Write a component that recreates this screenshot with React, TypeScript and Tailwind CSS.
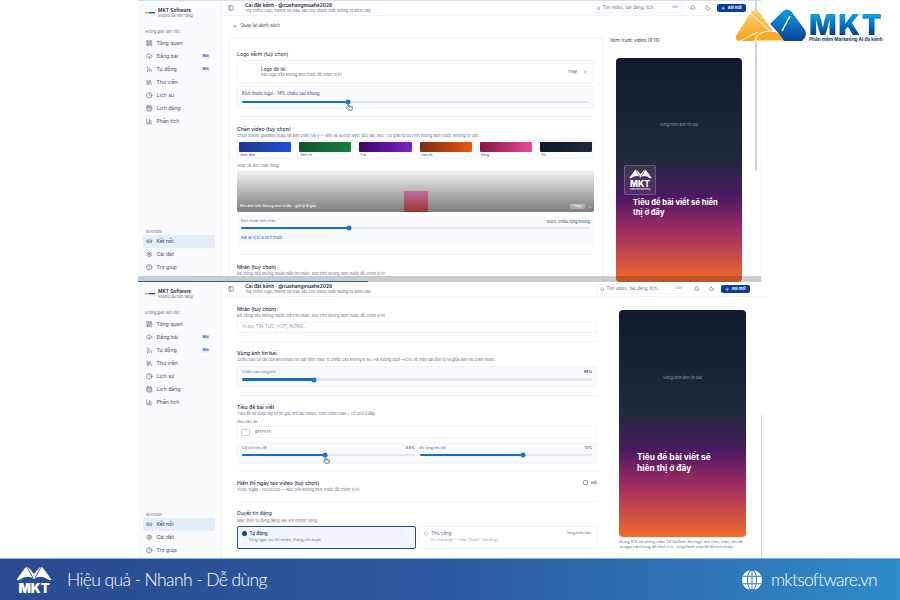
import {
  ArrowLeft,
  Bell,
  CalendarDays,
  ChartColumn,
  CircleHelp,
  Clock,
  CloudUpload,
  LayoutDashboard,
  Library,
  Link2,
  Moon,
  PanelLeft,
  Plus,
  Pointer,
  Rss,
  Search,
  Settings,
  X,
} from "lucide-react";

const workspace = [
  { label: "Tổng quan", icon: LayoutDashboard },
  { label: "Đăng bài", icon: CloudUpload, badge: "Mới" },
  { label: "Tự động", icon: Rss, badge: "Mới" },
  { label: "Thư viện", icon: Library },
  { label: "Lịch sử", icon: Clock },
  { label: "Lịch đăng", icon: CalendarDays },
  { label: "Phân tích", icon: ChartColumn },
];

const account = [
  { label: "Kết nối", icon: Link2, active: true },
  { label: "Cài đặt", icon: Settings },
  { label: "Trợ giúp", icon: CircleHelp },
];

const swatches = [
  { label: "Xanh đậm", cls: "bg-gradient-to-r from-[#1e3a8a] to-[#1d4ed8]" },
  { label: "Xanh lá", cls: "bg-gradient-to-r from-[#14532d] to-[#15803d]" },
  { label: "Tím", cls: "bg-gradient-to-r from-[#3b0764] to-[#7e22ce]" },
  { label: "Cam đỏ", cls: "bg-gradient-to-r from-[#7c2d12] to-[#ea580c]" },
  { label: "Hồng", cls: "bg-gradient-to-r from-[#831843] to-[#ec4899]" },
  { label: "Tối", cls: "bg-gradient-to-r from-[#0f172a] to-[#1e293b]" },
];

function NavRow({ item }: { item: { label: string; icon: typeof Clock; badge?: string; active?: boolean } }) {
  const Icon = item.icon;
  return (
    <div
      className={`flex h-[13px] items-center gap-[4px] rounded-[2px] pl-[3px] pr-[5px] text-[5.2px] ${
        item.active ? "bg-[#e3eefa] text-[#1e3a5f]" : "text-slate-600"
      }`}
    >
      <Icon className="h-[6.5px] w-[6.5px]" strokeWidth={2} />
      <span>{item.label}</span>
      {item.badge && (
        <span className="ml-auto rounded-[1px] bg-[#e9f0f9] px-[1.5px] text-[3.2px] font-semibold text-[#1e4e8c]">
          {item.badge}
        </span>
      )}
    </div>
  );
}

function Sidebar({ pad }: { pad: string }) {
  return (
    <aside className={`flex h-[276px] w-[84px] shrink-0 flex-col border-r border-slate-100 bg-[#fafbfd] pl-[5px] pr-[6px] pt-[7px] ${pad}`}>
      <div className="flex h-[9px] items-center gap-[3px] pl-[2px]">
        <svg viewBox="0 0 10 3" className="h-[3px] w-[10px]">
          <rect x="0" y="1" width="4" height="1.4" fill="#f59e0b" />
          <rect x="4" y="1" width="6" height="1.4" fill="#1d4ed8" />
        </svg>
        <div className="leading-[5px]">
          <p className="text-[4.8px] font-semibold text-slate-800">MKT Software</p>
          <p className="text-[3.9px] text-slate-500">Studio đa nền tảng</p>
        </div>
      </div>
      <p className="mt-[12px] mb-[3px] pl-[2px] text-[3.7px] leading-[5px] text-slate-500">Không gian làm việc</p>
      {workspace.map((item) => (
        <NavRow key={item.label} item={item} />
      ))}
      <div className="mt-auto">
        <p className="mb-[1px] pl-[2px] text-[3.7px] leading-[5px] text-slate-500">Tài khoản</p>
        {account.map((item) => (
          <NavRow key={item.label} item={item} />
        ))}
      </div>
    </aside>
  );
}

function Header({ searchW }: { searchW: string }) {
  return (
    <header className="flex h-[15px] shrink-0 items-center border-b border-slate-100 pl-[6px]">
      <PanelLeft className="h-[6px] w-[6px] text-slate-600" strokeWidth={2} />
      <div className="ml-[11px] leading-[5.5px]">
        <p className="text-[4.9px] font-semibold text-slate-800">Cài đặt kênh · @cushangmuahe2026</p>
        <p className="text-[3.9px] text-slate-500">Tùy chỉnh logo, theme và màu sắc cho video xuất xưởng từ kênh này</p>
      </div>
      <div className={`ml-auto flex h-[10px] ${searchW} items-center gap-[2px] rounded-[2px] border border-slate-100 pl-[2px] pr-[4px] text-[4.4px] text-slate-500`}>
        <Search className="h-[4.5px] w-[4.5px]" strokeWidth={2} />
        <span>Tìm video, bài đăng, lịch...</span>
        <span className="ml-auto text-[3.4px]">Ctrl</span>
      </div>
      <Bell className="ml-[7px] h-[5.5px] w-[5.5px] text-slate-600" strokeWidth={2} />
      <Moon className="ml-[9px] h-[5.5px] w-[5.5px] text-slate-600" strokeWidth={2} />
      <button className="ml-[7px] mr-[15px] flex h-[8px] w-[29px] items-center justify-center gap-[2px] rounded-[2px] bg-[#0b3f94] text-[3.9px] font-semibold text-white">
        <Plus className="h-[4.5px] w-[4.5px]" strokeWidth={3} />
        Bài mới
      </button>
    </header>
  );
}

function Slider({ pct, thick = false }: { pct: number; thick?: boolean }) {
  return (
    <div className={`relative rounded-full bg-slate-200 ${thick ? "h-[3px]" : "h-[2px]"}`}>
      <div className="h-full rounded-full bg-[#1a6fc4]" style={{ width: `${pct}%` }} />
      <div
        className="absolute top-1/2 h-[5px] w-[5px] -translate-x-1/2 -translate-y-1/2 rounded-full bg-[#1a78d0]"
        style={{ left: `${pct}%` }}
      />
    </div>
  );
}

function Heading({ title, desc }: { title: string; desc: string }) {
  return (
    <div className="leading-[6.5px]">
      <p className="text-[5.1px] font-medium text-slate-800">{title}</p>
      <p className="text-[3.9px] text-slate-500">{desc}</p>
    </div>
  );
}

function Cursor({ cls }: { cls: string }) {
  return <Pointer className={`absolute h-[7px] w-[7px] fill-white text-slate-700 ${cls}`} strokeWidth={2} />;
}

function Phone({ size, children }: { size: string; children: React.ReactNode }) {
  return (
    <div
      className={`relative flex shrink-0 flex-col rounded-[4px] bg-[linear-gradient(180deg,#111a2e_0%,#1e293b_44%,#4c1a62_62%,#9b2a63_76%,#f26b2c_100%)] ${size}`}
    >
      {children}
    </div>
  );
}

// white peaks used by the banner and the preview logo
function Peaks({ cut, cls }: { cut: string; cls: string }) {
  return (
    <svg viewBox="0 0 36 15" className={cls}>
      <path
        d="M1 13 L9 2 Q11 0 13 2 L18 8 L23 2 Q25 0 27 2 L35 13 Q36 15 33 14 Q24 8 18 13 Q12 8 3 14 Q0 15 1 13 Z"
        fill="#fff"
      />
      <path d="M11 1 L17 12 M25 1 L19 12" fill="none" stroke={cut} strokeWidth="0.9" />
    </svg>
  );
}

function SmallLogo() {
  return (
    <div className="absolute left-[8px] top-[107px] flex h-[30px] w-[32px] flex-col items-center justify-center rounded-[2px] border border-white/20 bg-[#ffffff14]">
      <Peaks cut="#4c1a62" cls="h-[10px] w-[23px]" />
      <span className="mt-[1px] text-[8.5px] font-extrabold leading-[8px] text-white">MKT</span>
      <span className="text-[2px] leading-[3px] text-white">Phần mềm Marketing</span>
    </div>
  );
}

function TopScreen() {
  return (
    <section className="relative flex h-[282px] w-[624px] overflow-hidden border-t border-r border-t-[#cfe3f2] border-r-slate-100">
      <Sidebar pad="pb-[3px]" />
      <div className="flex min-w-0 flex-1 flex-col">
        <Header searchW="w-[90px]" />
        <div className="flex flex-1">
          <div className="w-[381px] shrink-0 pl-[6px]">
            <div className="flex h-[21px] items-center gap-[2px] pl-[5px] text-[4.4px] text-slate-700">
              <ArrowLeft className="h-[4.5px] w-[4.5px]" strokeWidth={2} />
              <span className="ml-[1px]">Quay lại danh sách</span>
            </div>
            <div className="relative h-[260px] rounded-t-[3px] border border-slate-100 pl-[8px] pr-[8px] pt-[13px]">
              <p className="text-[5.1px] leading-[6px] text-slate-800">Logo kênh (tuỳ chọn)</p>
              <div className="mt-[3px] flex h-[23px] items-center rounded-[2px] border border-slate-100 pl-[23px] pr-[6px]">
                <div className="leading-[6px]">
                  <p className="text-[4.7px] text-slate-800">Logo đã tải</p>
                  <p className="text-[3.8px] text-slate-500">Kéo logo trên khung xem trước để chỉnh vị trí</p>
                </div>
                <span className="ml-auto text-[3.9px] text-slate-600">Thay</span>
                <X className="ml-[6px] h-[4px] w-[4px] text-slate-500" strokeWidth={2} />
              </div>
              <div className="mt-[3px] h-[23px] rounded-[2px] border border-slate-100 bg-[#f8fafc] px-[4px] pt-[4px]">
                <p className="mb-[5px] text-[4.2px] leading-[5px] text-slate-700">Kích thước logo - 14% chiều cao khung</p>
                <Slider pct={30.5} />
              </div>
              <Cursor cls="left-[117px] top-[66px]" />
              <div className="mt-[7px] border-t border-slate-100 pt-[9px]">
                <Heading
                  title="Chân video (tuỳ chọn)"
                  desc="Chọn theme gradient hoặc tải ảnh chân tuỳ ý — ảnh sẽ là một layer độc lập, kéo / co giãn tự do trên khung xem trước (không tự cắt)."
                />
              </div>
              <div className="mt-[1px] grid grid-cols-6 gap-[4px]">
                {swatches.map((s) => (
                  <div key={s.label} className="h-[19px] rounded-[1px] border border-slate-100 p-[1px]">
                    <div className={`h-[10px] rounded-[1px] ${s.cls}`} />
                    <p className="pl-[1px] text-[3.3px] leading-[6px] text-slate-600">{s.label}</p>
                  </div>
                ))}
              </div>
              <p className="mt-[4px] text-[3.7px] leading-[5px] text-slate-500">Hoặc tải ảnh chân riêng</p>
              <div className="relative mt-[2px] flex h-[42px] items-end justify-between overflow-hidden rounded-[2px] bg-gradient-to-b from-[#f4f4f4] to-[#7d7d7d] px-[3px] pb-[3px]">
                <div className="absolute bottom-0 left-[167px] h-[21px] w-[24px] bg-gradient-to-b from-[#c0709f] to-[#9b2f2f]" />
                <span className="relative text-[3.6px] font-medium text-white">Kéo ảnh trên khung xem trước - giữ tỷ lệ gốc</span>
                <span className="relative flex items-center gap-[3px] text-[3.6px] text-white">
                  <span className="rounded-[1px] bg-white/30 px-[3px]">Thay</span>
                  <X className="h-[3.5px] w-[3.5px]" strokeWidth={2} />
                </span>
              </div>
              <div className="mt-[3px] h-[32px] rounded-[2px] bg-[#f8fafc] px-[4px] pt-[4px]">
                <div className="mb-[3px] flex justify-between text-[3.6px] leading-[5px] text-slate-500">
                  <span>Kích thước ảnh chân</span>
                  <span className="text-[3.9px] text-slate-700">100% chiều rộng khung</span>
                </div>
                <Slider pct={31} />
                <p className="mt-[6px] text-[3.7px] leading-[5px] text-[#2563a8]">Đặt lại vị trí &amp; kích thước</p>
              </div>
              <div className="mt-[7px] border-t border-slate-100 pt-[9px]">
                <Heading
                  title="Nhãn (tuỳ chọn)"
                  desc="Để trống nếu không muốn hiển thị nhãn. Kéo trên khung xem trước để chỉnh vị trí."
                />
              </div>
            </div>
          </div>
          <div className="relative flex-1 pl-[7px]">
            <p className="pt-[21px] text-[4.7px] leading-[6px] text-slate-700">Xem trước video (9:16)</p>
            <div className="mt-[15px] pl-[6px]">
              <Phone size="h-[224px] w-[126px]">
                <p className="pt-[64px] text-center text-[3.9px] text-slate-400">Vùng hình ảnh tin bài</p>
                <SmallLogo />
                <p className="absolute left-[17px] top-[140px] w-[94px] text-[7.6px] font-bold leading-[10px] text-white">
                  Tiêu đề bài viết sẽ hiển thị ở đây
                </p>
              </Phone>
            </div>
          </div>
        </div>
      </div>
      <div className="absolute right-[4px] top-0 h-[170px] w-[2px] bg-slate-300" />
      <div className="absolute bottom-0 left-0 h-[6px] w-full bg-black/20">
        <div className="absolute bottom-0 left-0 h-[1.5px] w-[230px] bg-[#1d63c0]" />
      </div>
    </section>
  );
}

function BottomScreen() {
  return (
    <section className="relative flex h-[276px] w-[627px] overflow-hidden">
      <Sidebar pad="pb-[1px]" />
      <div className="flex min-w-0 flex-1 flex-col">
        <Header searchW="w-[90px]" />
        <div className="flex flex-1">
          <div className="w-[384px] shrink-0 pl-[15px] pr-[9px] pt-[9px]">
            <Heading title="Nhãn (tuỳ chọn)" desc="Để trống nếu không muốn hiển thị nhãn. Kéo trên khung xem trước để chỉnh vị trí." />
            <div className="mt-[3px] flex h-[11px] items-center rounded-[2px] border border-slate-100 pl-[4px] text-[4.6px] text-slate-400">
              Ví dụ: TIN TỨC, HOT, NÓNG...
            </div>
            <div className="mt-[8px] border-t border-slate-100 pt-[8px]">
              <Heading
                title="Vùng ảnh tin bài"
                desc="Chiều cao tối đa của ảnh/video tin bài (tính theo % chiều cao khung 9:16). Hạ xuống dưới ~63% sẽ thấy dải đen lộ ra giữa ảnh và chân video."
              />
            </div>
            <div className="mt-[3px] h-[21px] rounded-[2px] border border-slate-100 bg-[#f8fafc] px-[4px] pt-[3px]">
              <div className="mb-[3px] flex justify-between text-[3.6px] leading-[5px] text-slate-500">
                <span>Chiều cao vùng ảnh</span>
                <span className="font-semibold text-slate-700">58%</span>
              </div>
              <Slider pct={20.5} thick />
            </div>
            <div className="mt-[8px] border-t border-slate-100 pt-[8px]">
              <Heading title="Tiêu đề bài viết" desc="Tiêu đề sẽ được lấy từ tin gốc khi tạo video. Tinh chỉnh màu + cỡ chữ ở đây." />
            </div>
            <p className="mt-[3px] text-[3.6px] leading-[5px] text-slate-500">Màu tiêu đề</p>
            <div className="mt-[1px] flex h-[12px] items-center gap-[5px] rounded-[2px] border border-slate-100 pl-[3px] text-[3.9px] text-slate-600">
              <span className="h-[7px] w-[9px] rounded-[1px] border border-slate-300 bg-white" />
              #FFFFFF
            </div>
            <div className="relative mt-[4px] grid h-[22px] grid-cols-2 gap-[5px] rounded-[2px] border border-slate-100 bg-[#f8fafc] px-[4px] pt-[3px]">
              <div>
                <div className="mb-[3px] flex justify-between text-[3.6px] leading-[5px] text-slate-500">
                  <span>Cỡ chữ tiêu đề</span>
                  <span className="text-slate-700">6.8%</span>
                </div>
                <Slider pct={48} />
              </div>
              <div>
                <div className="mb-[3px] flex justify-between text-[3.6px] leading-[5px] text-slate-500">
                  <span>Độ rộng tiêu đề</span>
                  <span className="text-slate-700">72%</span>
                </div>
                <Slider pct={60} />
              </div>
              <Cursor cls="left-[85px] top-[14px]" />
            </div>
            <div className="mt-[7px] flex items-start justify-between border-t border-slate-100 pt-[8px]">
              <Heading title="Hiển thị ngày tạo video (tuỳ chọn)" desc="Ví dụ: Ngày : 10/3/2026 — kéo trên khung xem trước để chỉnh vị trí." />
              <div className="flex items-center gap-[3px] text-[3.9px] text-slate-600">
                <span className="h-[5px] w-[5px] rounded-[1px] border border-slate-400" />
                Bật
              </div>
            </div>
            <div className="mt-[8px] border-t border-slate-100 pt-[8px]">
              <p className="text-[5.1px] leading-[7px] text-slate-800">Duyệt tin đăng</p>
              <p className="mt-[1px] text-[3.9px] leading-[6px] text-slate-500">Mặc định tự động đăng sau khi render xong.</p>
            </div>
            <div className="mt-[2px] grid grid-cols-2 gap-[3px]">
              <div className="h-[23px] rounded-[2px] border border-[#1e4e8c] bg-[#f1f6fc] pl-[4px] pt-[3px]">
                <p className="flex items-center gap-[3px] text-[4.6px] font-medium leading-[7px] text-slate-800">
                  <span className="h-[4.5px] w-[4.5px] rounded-full bg-[#0b3f94]" />
                  Tự động
                </p>
                <p className="pl-[7px] text-[3.5px] leading-[7px] text-slate-500">Đăng ngay sau khi render, không cần duyệt</p>
              </div>
              <div className="h-[23px] rounded-[2px] border border-slate-100 pl-[4px] pr-[5px] pt-[3px]">
                <p className="flex items-center gap-[3px] text-[4.6px] leading-[7px] text-slate-500">
                  <span className="h-[4.5px] w-[4.5px] rounded-full border border-slate-300" />
                  Thủ công
                  <span className="ml-auto text-[3.3px]">Sáng phiên bản</span>
                </p>
                <p className="pl-[7px] text-[3.5px] leading-[7px] text-slate-400">Tin chờ duyệt — nhấn "Duyệt" mới đăng</p>
              </div>
            </div>
          </div>
          <div className="flex-1 pl-[13px] pt-[13px]">
            <Phone size="h-[227px] w-[127px]">
              <p className="pt-[65px] text-center text-[3.9px] text-slate-400">Vùng hình ảnh tin bài</p>
              <p className="absolute left-[18px] top-[142px] w-[90px] text-[8.4px] font-bold leading-[11px] text-white">
                Tiêu đề bài viết sẽ hiển thị ở đây
              </p>
            </Phone>
            <p className="mt-[3px] w-[127px] text-[3.5px] leading-[5px] text-slate-500">
              Khung 9:16 mô phỏng video TikTok/Reel. Kéo logo, ảnh chân, nhãn, tiêu đề và ngày trên khung để chỉnh vị trí, vùng thanh trượt để đổi kích thước.
            </p>
          </div>
        </div>
      </div>
      <div className="absolute right-[3px] bottom-0 h-[143px] w-[1.5px] bg-slate-300" />
    </section>
  );
}

function BrandOverlay() {
  return (
    <div className="absolute left-[736px] top-[8px] flex h-[35px] w-[146px]">
      <svg viewBox="0 0 72 33" className="h-[33px] w-[72px] shrink-0">
        <defs>
          <linearGradient id="brand-orange" x1="0" y1="0" x2="0" y2="1">
            <stop offset="0" stopColor="#fdd26b" />
            <stop offset="1" stopColor="#f7a11c" />
          </linearGradient>
          <linearGradient id="brand-blue" x1="0" y1="0" x2="0" y2="1">
            <stop offset="0" stopColor="#10a0e0" />
            <stop offset="1" stopColor="#0b3f94" />
          </linearGradient>
        </defs>
        <path d="M15 4 Q19 0 23 4 L36 22 L36 33 L4 33 Q-1 33 0 28 Z" fill="url(#brand-orange)" />
        <path d="M14 5 L34 23 M4 33 L22 24" fill="none" stroke="#fff" strokeWidth="1" />
        <path d="M19 33 A15 10 0 0 1 49 33 Z" fill="#f9ab25" stroke="#fff" strokeWidth="1" />
        <path d="M34 16 L47 3 Q51 0 55 3 L69 22 Q72 28 66 33 L48 33 Q45 27 34 16 Z" fill="url(#brand-blue)" />
        <path d="M54 8 L46 23" fill="none" stroke="#fff" strokeWidth="1.5" />
      </svg>
      <div className="flex flex-col pl-[1px] pt-[6px]">
        <span className="bg-gradient-to-b from-[#12a3e3] to-[#0b3f94] bg-clip-text text-[29px] font-black leading-[21px] tracking-[1.5px] text-transparent">
          MKT
        </span>
        <span className="mt-[1px] whitespace-nowrap text-[4.7px] font-bold leading-[6px] text-[#123c7d]">
          Phần mềm Marketing AI đa kênh
        </span>
      </div>
    </div>
  );
}

function Banner() {
  return (
    <footer className="flex h-[42px] shrink-0 items-center border-t border-[#7fb6e0] bg-gradient-to-r from-[#2a4a90] via-[#2c5a9e] to-[#2f8bc9] pl-[16px] pr-[23px] font-['Lato',sans-serif] text-white">
      <div className="flex w-[36px] flex-col items-center">
        <Peaks cut="#2a4a90" cls="h-[15px] w-[36px]" />
        <span className="mt-[1px] font-['Inter',sans-serif] text-[13px] font-black leading-[12px]">MKT</span>
      </div>
      <span className="ml-[15px] text-[17.5px] font-light leading-none tracking-[-0.6px]">Hiệu quả - Nhanh - Dễ dùng</span>
      <svg viewBox="0 0 24 24" className="ml-auto h-[22px] w-[22px]">
        <circle cx="12" cy="12" r="11" fill="#fff" />
        <g fill="none" stroke="#2f7fbd" strokeWidth="1.1">
          <ellipse cx="12" cy="12" rx="5" ry="11" />
          <path d="M12 1 V23 M2 8 H22 M2 16 H22" />
        </g>
      </svg>
      <span className="ml-[8px] text-[17.5px] font-light leading-none tracking-[-0.7px]">mktsoftware.vn</span>
    </footer>
  );
}

export default function App() {
  return (
    <div className="relative flex h-[600px] w-[900px] flex-col overflow-hidden bg-white font-['Inter',sans-serif]">
      <main className="flex h-[558px] flex-col pl-[138px]">
        <TopScreen />
        <BottomScreen />
      </main>
      <Banner />
      <BrandOverlay />
    </div>
  );
}
